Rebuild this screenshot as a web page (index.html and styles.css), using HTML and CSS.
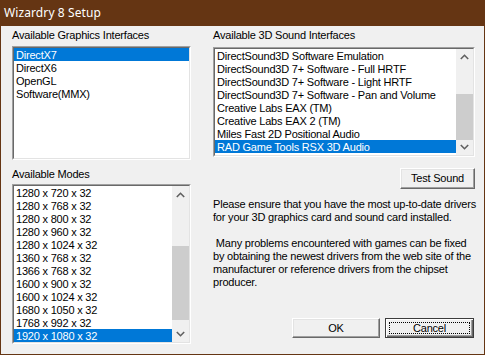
FILE: index.html
```html
<!DOCTYPE html>
<html>
<head>
<meta charset="utf-8">
<link rel="stylesheet" href="styles.css">
</head>
<body>
<div class="window">
  <div class="titlebar"><span class="title">Wizardry 8 Setup</span></div>
  <div class="client">
    <div class="col left">
      <div class="label">Available Graphics Interfaces</div>
      <div class="listbox gfx">
        <div class="inner">
          <div class="items">
            <div class="item sel">DirectX7</div>
            <div class="item">DirectX6</div>
            <div class="item">OpenGL</div>
            <div class="item">Software(MMX)</div>
          </div>
        </div>
      </div>
      <div class="label modes-label">Available Modes</div>
      <div class="listbox modes">
        <div class="inner">
          <div class="items">
            <div class="item">1280 x 720 x 32</div>
            <div class="item">1280 x 768 x 32</div>
            <div class="item">1280 x 800 x 32</div>
            <div class="item">1280 x 960 x 32</div>
            <div class="item">1280 x 1024 x 32</div>
            <div class="item">1360 x 768 x 32</div>
            <div class="item">1366 x 768 x 32</div>
            <div class="item">1600 x 900 x 32</div>
            <div class="item">1600 x 1024 x 32</div>
            <div class="item">1680 x 1050 x 32</div>
            <div class="item">1768 x 992 x 32</div>
            <div class="item sel">1920 x 1080 x 32</div>
          </div>
          <div class="scrollbar">
            <div class="arrow"><svg width="9" height="6" viewBox="0 0 9 6"><polyline points="0.8,5 4.5,1.3 8.2,5" fill="none" stroke="#606060" stroke-width="1.6"/></svg></div>
            <div class="track"><div class="thumb modes-thumb"></div></div>
            <div class="arrow"><svg width="9" height="6" viewBox="0 0 9 6"><polyline points="0.8,1 4.5,4.7 8.2,1" fill="none" stroke="#606060" stroke-width="1.6"/></svg></div>
          </div>
        </div>
      </div>
    </div>
    <div class="col right">
      <div class="label">Available 3D Sound Interfaces</div>
      <div class="listbox sound">
        <div class="inner">
          <div class="items">
            <div class="item">DirectSound3D Software Emulation</div>
            <div class="item">DirectSound3D 7+ Software - Full HRTF</div>
            <div class="item">DirectSound3D 7+ Software - Light HRTF</div>
            <div class="item">DirectSound3D 7+ Software - Pan and Volume</div>
            <div class="item">Creative Labs EAX (TM)</div>
            <div class="item">Creative Labs EAX 2 (TM)</div>
            <div class="item">Miles Fast 2D Positional Audio</div>
            <div class="item sel">RAD Game Tools RSX 3D Audio</div>
          </div>
          <div class="scrollbar">
            <div class="arrow"><svg width="9" height="6" viewBox="0 0 9 6"><polyline points="0.8,5 4.5,1.3 8.2,5" fill="none" stroke="#606060" stroke-width="1.6"/></svg></div>
            <div class="track"><div class="thumb sound-thumb"></div></div>
            <div class="arrow"><svg width="9" height="6" viewBox="0 0 9 6"><polyline points="0.8,1 4.5,4.7 8.2,1" fill="none" stroke="#606060" stroke-width="1.6"/></svg></div>
          </div>
        </div>
      </div>
      <div class="btn test">Test Sound</div>
      <div class="text">
        <p>Please ensure that you have the most up-to-date drivers<br>for your 3D graphics card and sound card installed.</p>
        <p class="p2">&nbsp;Many problems encountered with games can be fixed<br>by obtaining the newest drivers from the web site of the<br>manufacturer or reference drivers from the chipset<br>producer.</p>
      </div>
      <div class="actions">
        <div class="btn ok">OK</div>
        <div class="btn cancel"><span class="focus">Cancel</span></div>
      </div>
    </div>
  </div>
</div>
</body>
</html>
```
FILE: styles.css
```css
html, body {
  margin: 0;
  padding: 0;
  background: #f0f0f0;
}
.window {
  width: 485px;
  height: 355px;
  box-sizing: border-box;
  border: 1px solid #653513;
  border-top: 0;
  background: #f0f0f0;
  font-family: "Liberation Sans", Arial, sans-serif;
  font-size: 11px;
  letter-spacing: -0.2px;
  color: #000;
  overflow: hidden;
}
.titlebar {
  height: 26px;
  background: #653513;
  display: flex;
  align-items: center;
  padding-left: 4px;
  margin: 0 -1px;
}
.title {
  font-family: "Noto Sans", "Open Sans", sans-serif;
  font-size: 12px;
  letter-spacing: 0.1px;
  color: #ffffff;
  line-height: 16px;
  padding-bottom: 1px;
}
.client {
  display: grid;
  grid-template-columns: 179px 262px;
  column-gap: 22px;
  padding-left: 11px;
  padding-top: 3px;
}
.col {
  display: flex;
  flex-direction: column;
}
.label {
  height: 13px;
  line-height: 13px;
  white-space: nowrap;
}
.listbox {
  box-sizing: border-box;
  border: 1px solid;
  border-color: #a0a0a0 #ffffff #ffffff #a0a0a0;
  background: #fff;
}
.listbox .inner {
  box-sizing: border-box;
  height: 100%;
  border: 1px solid;
  border-color: #696969 #e3e3e3 #e3e3e3 #696969;
  display: flex;
  overflow: hidden;
}
.items {
  flex: 1;
  min-width: 0;
}
.item {
  height: 13px;
  line-height: 14px;
  padding-left: 2px;
  white-space: nowrap;
  overflow: hidden;
}
.item.sel {
  background: #0078d7;
  color: #fff;
}
.gfx {
  margin-top: 4px;
  height: 114px;
}
.modes-label {
  margin-top: 8px;
}
.modes {
  margin-top: 3px;
  height: 160px;
}
.sound {
  margin-top: 5px;
  height: 110px;
}
.scrollbar {
  width: 17px;
  background: #f0f0f0;
  display: flex;
  flex-direction: column;
}
.arrow {
  height: 17px;
  display: flex;
  align-items: center;
  justify-content: center;
}
.arrow svg {
  display: block;
}
.track {
  flex: 1;
}
.thumb {
  background: #cdcdcd;
}
.sound-thumb {
  margin-top: 29px;
  height: 46px;
}
.modes-thumb {
  margin-top: 43px;
  height: 74px;
}
.btn {
  box-sizing: border-box;
  background: #f0f0f0;
  border: 1px solid;
  border-color: #ffffff #696969 #696969 #ffffff;
  box-shadow: inset -1px -1px #a0a0a0, inset 1px 1px #e3e3e3;
  display: flex;
  align-items: center;
  justify-content: center;
  white-space: nowrap;
}
.test {
  align-self: flex-end;
  width: 75px;
  height: 21px;
  margin-top: 11px;
  line-height: 13px;
}
.text {
  margin-top: 9px;
  white-space: nowrap;
}
.text p {
  margin: 0;
  line-height: 13px;
}
.text .p2 {
  margin-top: 13px;
}
.actions {
  margin-top: 29px;
  display: flex;
  justify-content: flex-end;
  gap: 5px;
  padding-right: 1px;
}
.ok {
  width: 88px;
  height: 20px;
}
.cancel {
  width: 89px;
  height: 20px;
  border: 1px solid #3c3c3c;
  box-shadow: inset 1px 1px #ffffff, inset -1px -1px #696969, inset -2px -2px #a0a0a0;
  padding: 3px;
}
.cancel .focus {
  flex: 1;
  align-self: stretch;
  border: 1px dotted #000;
  display: flex;
  align-items: center;
  justify-content: center;
  line-height: 12px;
}
```
